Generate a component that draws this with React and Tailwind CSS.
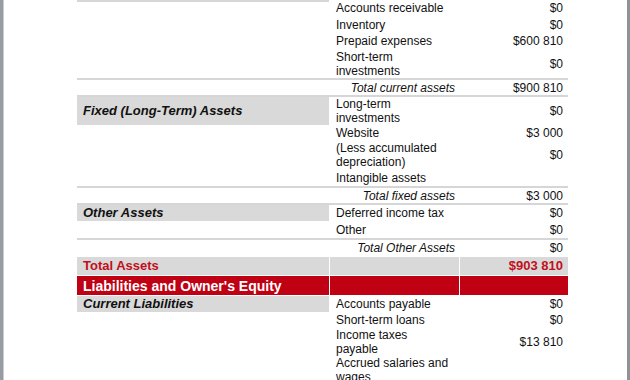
import React from "react";

const rows = [
  { h: "h-[16px]", c1top: true, c2: ["Accounts receivable"], c3: "$0" },
  { h: "h-[17px]", c2: ["Inventory"], c3: "$0" },
  { h: "h-[16px]", c2: ["Prepaid expenses"], c3: "$600 810" },
  { h: "h-[29px]", c2: ["Short-term", "investments"], c3: "$0" },
  { line: true },
  { h: "h-[15px]", total: "Total current assets", c3: "$900 810" },
  { line: true },
  { h: "h-[28px]", c1: "Fixed (Long-Term) Assets", c2: ["Long-term", "investments"], c3: "$0" },
  { h: "h-[15px]", c2: ["Website"], c3: "$3 000" },
  { h: "h-[29px]", c2: ["(Less accumulated", "depreciation)"], c3: "$0" },
  { h: "h-[17px]", c2: ["Intangible assets"], c3: "" },
  { line: true },
  { h: "h-[15px]", total: "Total fixed assets", c3: "$3 000" },
  { line: true },
  { h: "h-[16px]", c1: "Other Assets", c2: ["Deferred income tax"], c3: "$0" },
  { h: "h-[17px]", c2: ["Other"], c3: "$0" },
  { line: true },
  { h: "h-[15px]", total: "Total Other Assets", c3: "$0" },
];

const rows2 = [
  { h: "h-[16px]", c1: "Current Liabilities", c2: ["Accounts payable"], c3: "$0" },
  { h: "h-[16px]", c2: ["Short-term loans"], c3: "$0" },
  { h: "h-[28px]", c2: ["Income taxes", "payable"], c3: "$13 810" },
  { h: "h-[28px]", c2: ["Accrued salaries and", "wages"], c3: "" },
];

function Row({ r }) {
  if (r.line) return <div className="h-[2px] w-[491px] shrink-0 bg-[#d6d6d6]" />;
  return (
    <div className={`flex ${r.h} shrink-0 gap-x-px`}>
      <div
        className={`w-[252px] shrink-0 ${r.c1top ? "border-t-2 border-[#d6d6d6]" : ""}`}
      >
        {r.c1 && (
          <div className="h-full flex items-center bg-[#d9d9d9] pl-[6px] text-[13px] font-bold italic leading-[14px]">
            {r.c1}
          </div>
        )}
      </div>
      <div className="w-[129px] shrink-0 flex flex-col justify-center">
        {r.total ? (
          <div className="text-right pr-[4px] italic text-[12px] leading-[14px]">{r.total}</div>
        ) : (
          r.c2.map((t, i) => (
            <div key={i} className="pl-[6px] text-[12px] leading-[14px] whitespace-nowrap">
              {t}
            </div>
          ))
        )}
      </div>
      <div className="w-[108px] shrink-0 flex items-center justify-end pr-[5px] text-[12px] leading-[14px]">
        {r.c3}
      </div>
    </div>
  );
}

export default function App() {
  return (
    <div
      className="w-[630px] h-[380px] overflow-hidden bg-white flex text-[#111]"
      style={{ fontFamily: '"Liberation Sans", Arial, sans-serif' }}
    >
      <div className="w-[3px] h-full bg-[#969ba4] shrink-0" />
      <div className="w-[1px] h-full bg-[#c9ccd1] shrink-0" />
      <div className="flex-1 pl-[73px] flex flex-col">
        {rows.map((r, i) => (
          <Row key={i} r={r} />
        ))}
        <div className="h-[2px] shrink-0" />
        <div className="flex h-[18px] shrink-0 gap-x-px">
          <div className="w-[252px] bg-[#d9d9d9] flex items-center pl-[6px] text-[13px] font-bold text-[#c20f1c] leading-[14px]">
            Total Assets
          </div>
          <div className="w-[129px] bg-[#d9d9d9]" />
          <div className="w-[108px] bg-[#d9d9d9] flex items-center justify-end pr-[5px] text-[13px] font-bold text-[#c20f1c] leading-[14px]">
            $903 810
          </div>
        </div>
        <div className="h-[1px] shrink-0" />
        <div className="flex h-[19px] shrink-0 gap-x-px">
          <div className="w-[252px] bg-[#c00013] flex items-center pl-[6px] text-[14px] font-bold text-white leading-[16px] whitespace-nowrap">
            Liabilities and Owner's Equity
          </div>
          <div className="w-[129px] bg-[#c00013]" />
          <div className="w-[108px] bg-[#c00013]" />
        </div>
        <div className="h-[1px] shrink-0" />
        {rows2.map((r, i) => (
          <Row key={i} r={r} />
        ))}
      </div>
      <div className="w-[3px] h-full bg-[#8f9298] shrink-0" />
    </div>
  );
}
